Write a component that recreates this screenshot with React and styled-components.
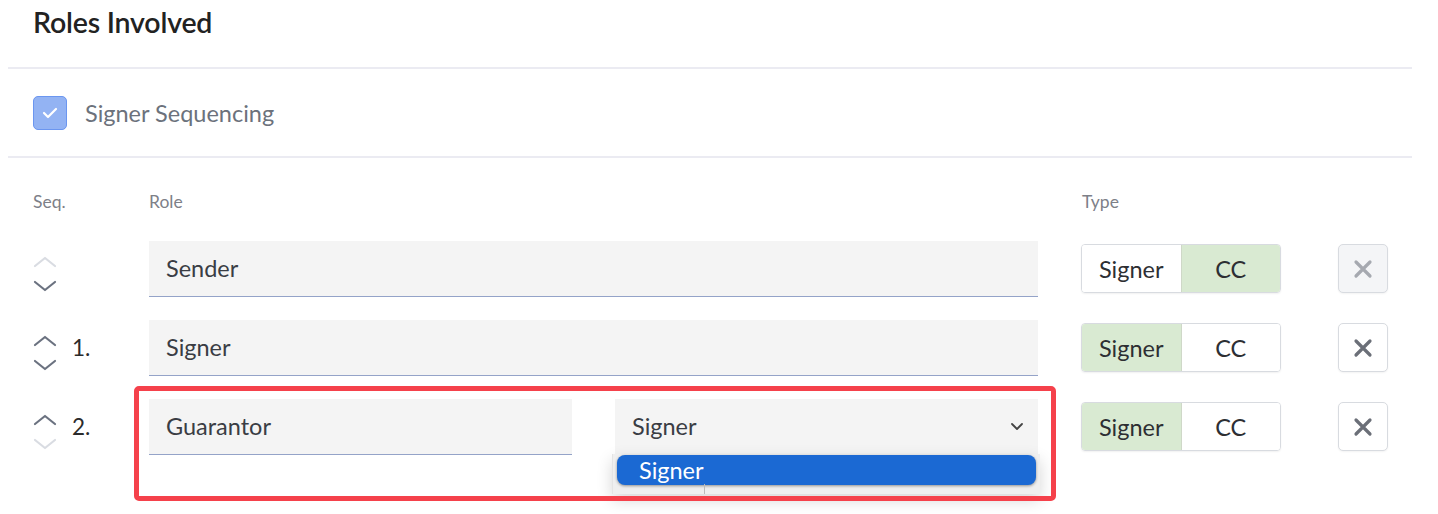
import React from "react";
import styled, { createGlobalStyle } from "styled-components";

const Global = createGlobalStyle`
  html, body { margin: 0; padding: 0; background: #fff; }
  body { font-family: "Lato", "Noto Sans", sans-serif; }
  * { box-sizing: border-box; }
`;

const Page = styled.div`
  width: 1438px;
  height: 514px;
  padding: 0 26px 0 8px;
  overflow: hidden;
  position: relative;
`;

const Title = styled.h2`
  margin: 0;
  padding: 5px 0 0 25px;
  height: 67px;
  font-size: 28.5px;
  font-weight: 600;
  color: #222;
  letter-spacing: -0.2px;
`;

const Divider = styled.div`
  height: 2px;
  background: #ebebf2;
`;

const CheckRow = styled.label`
  display: flex;
  align-items: center;
  gap: 18px;
  height: 87px;
  padding-left: 25px;
  font-size: 23.5px;
  color: #6c727c;
`;

const Box = styled.span`
  width: 34px;
  height: 34px;
  border-radius: 5px;
  background: #93b3f3;
  border: 1.5px solid #6b96f0;
  display: flex;
  align-items: center;
  justify-content: center;
`;

const Header = styled.div`
  display: grid;
  grid-template-columns: 116px 933px 1fr;
  padding: 33px 0 0 25px;
  height: 71px;
  font-size: 17.5px;
  color: #7d8088;
`;

const Row = styled.div`
  display: grid;
  grid-template-columns: 116px 889px 43px 200px 57px 50px;
  align-items: center;
  padding-left: 25px;
  height: 79px;
  position: relative;
`;

const Seq = styled.div`
  display: flex;
  align-items: center;
  gap: 15px;
  font-size: 22.5px;
  color: #2b2b2b;
`;

const Arrows = styled.div`
  display: flex;
  flex-direction: column;
  gap: 12px;
  width: 24px;
  margin-top: 10px;
`;

const Field = styled.div`
  height: 56px;
  background: #f4f4f4;
  border-bottom: 1.5px solid ${(p) => p.$line || "#94a3c8"};
  display: flex;
  align-items: center;
  justify-content: space-between;
  padding: 0 14px 0 17px;
  font-size: 23.5px;
  color: #3a3d44;
  position: relative;
`;

const Split = styled.div`
  display: grid;
  grid-template-columns: 423px 1fr;
  gap: 43px;
`;

const Toggle = styled.div`
  display: flex;
  height: 49px;
  border: 1px solid #d8dbe0;
  border-radius: 4px;
  overflow: hidden;
  box-shadow: 0 1px 2px rgba(0,0,0,0.06);
`;

const ToggleBtn = styled.div`
  flex: 1;
  display: flex;
  align-items: center;
  justify-content: center;
  font-size: 23.5px;
  color: #2d2f33;
  background: ${(p) => (p.$on ? "#d9ead2" : "#fff")};
  border-left: ${(p) => (p.$first ? "none" : "1px solid #cfd8c8")};
`;

const XBtn = styled.div`
  width: 50px;
  height: 49px;
  border: 1px solid #d8dbe0;
  border-radius: 5px;
  display: flex;
  align-items: center;
  justify-content: center;
  background: ${(p) => (p.$disabled ? "#f4f5f7" : "#fff")};
  box-shadow: 0 1px 2px rgba(0,0,0,0.05);
`;

const Highlight = styled.div`
  position: absolute;
  left: 126px;
  top: -1px;
  width: 922px;
  height: 115px;
  border: 5px solid #f5414b;
  border-radius: 5px;
  pointer-events: none;
  z-index: 3;
`;

const Menu = styled.div`
  position: absolute;
  left: -3px;
  top: 55px;
  width: 428px;
  height: 40px;
  background: #efefef;
  box-shadow: 0 6px 16px rgba(0,0,0,0.16);
  border-left: 1px solid #e4e4e4;
  z-index: 2;
  &::after {
    content: "";
    position: absolute;
    left: 91px;
    top: 30px;
    width: 1px;
    height: 10px;
    background: #bbb;
  }
`;

const Option = styled.div`
  position: absolute;
  left: 4px;
  top: 1px;
  right: 4px;
  height: 30px;
  background: #1b69d3;
  border-radius: 8px;
  box-shadow: 0 1px 3px rgba(0,0,0,0.4);
  color: #fff;
  font-size: 23.5px;
  padding-left: 22px;
  display: flex;
  align-items: center;
`;

const Up = ({ c }) => (
  <svg width="24" height="12" viewBox="0 0 24 12">
    <path d="M2 10 L12 2 L22 10" fill="none" stroke={c} strokeWidth="2.2" strokeLinecap="round" strokeLinejoin="round" />
  </svg>
);
const Down = ({ c }) => (
  <svg width="24" height="12" viewBox="0 0 24 12">
    <path d="M2 2 L12 10 L22 2" fill="none" stroke={c} strokeWidth="2.2" strokeLinecap="round" strokeLinejoin="round" />
  </svg>
);
const X = ({ c }) => (
  <svg width="20" height="20" viewBox="0 0 20 20">
    <path d="M3 3 L17 17 M17 3 L3 17" stroke={c} strokeWidth="3.2" strokeLinecap="round" />
  </svg>
);
const Caret = () => (
  <svg width="14" height="9" viewBox="0 0 14 9">
    <path d="M2 2 L7 7 L12 2" fill="none" stroke="#444" strokeWidth="1.8" strokeLinecap="round" strokeLinejoin="round" />
  </svg>
);

const ON = "#6b7280";
const OFF = "#d9dce2";

function TypeToggle({ signer }) {
  return (
    <Toggle>
      <ToggleBtn $first $on={signer}>Signer</ToggleBtn>
      <ToggleBtn $on={!signer}>CC</ToggleBtn>
    </Toggle>
  );
}

export default function App() {
  return (
    <Page>
      <Global />
      <Title>Roles Involved</Title>
      <Divider />
      <CheckRow>
        <Box>
          <svg width="16" height="12" viewBox="0 0 16 12">
            <path d="M2 6 L6 10 L14 2" fill="none" stroke="#fff" strokeWidth="2.2" strokeLinecap="round" strokeLinejoin="round" />
          </svg>
        </Box>
        Signer Sequencing
      </CheckRow>
      <Divider />
      <Header>
        <span>Seq.</span>
        <span>Role</span>
        <span>Type</span>
      </Header>
      <Row>
        <Seq>
          <Arrows><Up c={OFF} /><Down c={ON} /></Arrows>
        </Seq>
        <Field>Sender</Field>
        <span />
        <TypeToggle signer={false} />
        <span />
        <XBtn $disabled><X c="#a6a9b0" /></XBtn>
      </Row>
      <Row>
        <Seq>
          <Arrows><Up c={ON} /><Down c={ON} /></Arrows>
          1.
        </Seq>
        <Field>Signer</Field>
        <span />
        <TypeToggle signer />
        <span />
        <XBtn><X c="#6b6f78" /></XBtn>
      </Row>
      <Row>
        <Seq>
          <Arrows><Up c={ON} /><Down c={OFF} /></Arrows>
          2.
        </Seq>
        <Split>
          <Field>Guarantor</Field>
          <Field $line="#7ea2e6">
            Signer
            <Caret />
            <Menu>
              <Option>Signer</Option>
            </Menu>
          </Field>
        </Split>
        <span />
        <TypeToggle signer />
        <span />
        <XBtn><X c="#6b6f78" /></XBtn>
        <Highlight />
      </Row>
    </Page>
  );
}
